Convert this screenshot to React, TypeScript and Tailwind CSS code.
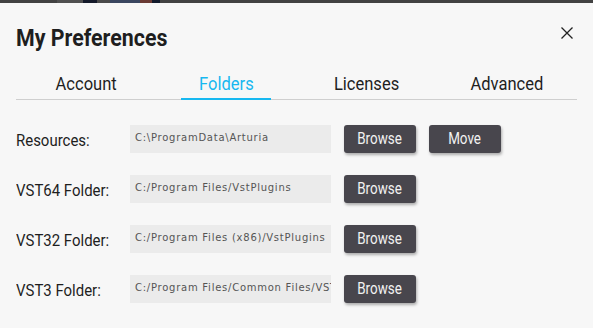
import React from "react";

const rows = [
  { label: "Resources:", path: "C:\\ProgramData\\Arturia", move: true },
  { label: "VST64 Folder:", path: "C:/Program Files/VstPlugins", move: false },
  { label: "VST32 Folder:", path: "C:/Program Files (x86)/VstPlugins", move: false },
  { label: "VST3 Folder:", path: "C:/Program Files/Common Files/VST3", move: false },
];

const tabs = ["Account", "Folders", "Licenses", "Advanced"];

function Button({ children }: { children: React.ReactNode }) {
  return (
    <button className="flex h-[28px] w-[72px] items-center justify-center rounded-[3px] bg-[#48464d] text-[16px] text-[#f2f2f2] shadow-[1px_2px_3px_rgba(0,0,0,0.3)]">
      <span className="inline-block scale-x-[0.84]">{children}</span>
    </button>
  );
}

export default function App() {
  return (
    <div className="h-[328px] w-[593px] overflow-hidden bg-[#f7f7f7] font-['Roboto',sans-serif] text-[#1e1e1e]">
      {/* strip of the window behind */}
      <div className="flex h-[3px] bg-[#424242]">
        <div className="w-[57px]" />
        <div className="w-[26px] bg-[#505050]" />
        <div className="w-[14px] bg-[#141a2a]" />
        <div className="w-[13px] bg-[#4a4a4a]" />
        <div className="w-[30px] bg-[#3a4660]" />
        <div className="w-[12px] bg-[#6a3a34]" />
        <div className="w-[8px] bg-[#121a2c]" />
      </div>

      <div className="px-4">
        <div className="flex items-start justify-between pt-[21px]">
          <h1 className="origin-left scale-x-[0.89] text-[24px] font-bold leading-[28px] whitespace-nowrap">
            My Preferences
          </h1>
          <button className="mr-[4px] mt-[3px] text-[#222]">
            <svg width="12" height="12" viewBox="0 0 12 12" fill="none" stroke="currentColor" strokeWidth="1.3">
              <path d="M0.5 0.5L11.5 11.5M11.5 0.5L0.5 11.5" />
            </svg>
          </button>
        </div>

        <div className="mt-[20px] grid grid-cols-4 border-b border-[#cfcfcf]">
          {tabs.map((t) => (
            <div key={t} className="relative flex justify-center pb-[3px]">
              <span
                className={`inline-block scale-x-[0.87] text-[19px] leading-[24px] ${
                  t === "Folders" ? "text-[#17b8f0]" : "text-[#1e1e1e]"
                }`}
              >
                {t}
              </span>
              {t === "Folders" && (
                <div className="absolute -bottom-[1px] left-1/2 h-[2px] w-[90px] -translate-x-1/2 bg-[#17b8f0]" />
              )}
            </div>
          ))}
        </div>

        <div className="mt-[25px] flex flex-col gap-[22px]">
          {rows.map((r) => (
            <div key={r.label} className="flex h-[28px] items-center">
              <div className="w-[114px] pt-[1px] text-[17px] leading-[24px]">
                <span className="inline-block origin-left scale-x-[0.88] whitespace-nowrap">{r.label}</span>
              </div>
              <div className="flex h-[28px] w-[201px] items-center overflow-hidden whitespace-nowrap bg-[#ebebeb] pb-[4px] pl-[5px] font-['DejaVu_Sans',sans-serif] text-[10px] tracking-[0.75px] text-[#555]">
                {r.path}
              </div>
              <div className="ml-[13px] flex gap-[13px]">
                <Button>Browse</Button>
                {r.move && <Button>Move</Button>}
              </div>
            </div>
          ))}
        </div>
      </div>
    </div>
  );
}
